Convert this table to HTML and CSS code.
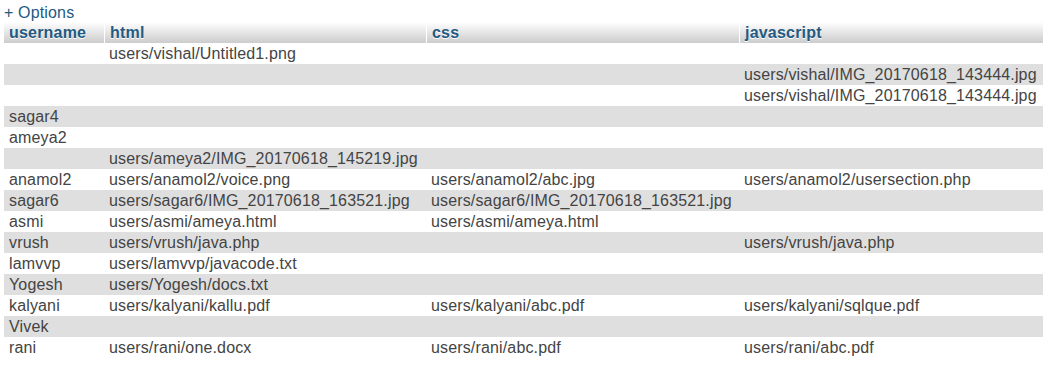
FILE: index.html
```html
<!DOCTYPE html>
<html>
<head>
<meta charset="utf-8">
<link rel="stylesheet" href="styles.css">
</head>
<body>
<div class="options"><a href="#">+ Options</a></div>
<table class="data">
  <colgroup>
    <col class="c1"><col class="c2"><col class="c3"><col class="c4">
  </colgroup>
  <thead>
    <tr><th><a href="#">username</a></th><th><a href="#">html</a></th><th><a href="#">css</a></th><th><a href="#">javascript</a></th></tr>
  </thead>
  <tbody>
    <tr class="odd"><td></td><td>users/vishal/Untitled1.png</td><td></td><td></td></tr>
    <tr class="even"><td></td><td></td><td></td><td>users/vishal/IMG_20170618_143444.jpg</td></tr>
    <tr class="odd"><td></td><td></td><td></td><td>users/vishal/IMG_20170618_143444.jpg</td></tr>
    <tr class="even"><td>sagar4</td><td></td><td></td><td></td></tr>
    <tr class="odd"><td>ameya2</td><td></td><td></td><td></td></tr>
    <tr class="even"><td></td><td>users/ameya2/IMG_20170618_145219.jpg</td><td></td><td></td></tr>
    <tr class="odd"><td>anamol2</td><td>users/anamol2/voice.png</td><td>users/anamol2/abc.jpg</td><td>users/anamol2/usersection.php</td></tr>
    <tr class="even"><td>sagar6</td><td>users/sagar6/IMG_20170618_163521.jpg</td><td>users/sagar6/IMG_20170618_163521.jpg</td><td></td></tr>
    <tr class="odd"><td>asmi</td><td>users/asmi/ameya.html</td><td>users/asmi/ameya.html</td><td></td></tr>
    <tr class="even"><td>vrush</td><td>users/vrush/java.php</td><td></td><td>users/vrush/java.php</td></tr>
    <tr class="odd"><td>lamvvp</td><td>users/lamvvp/javacode.txt</td><td></td><td></td></tr>
    <tr class="even"><td>Yogesh</td><td>users/Yogesh/docs.txt</td><td></td><td></td></tr>
    <tr class="odd"><td>kalyani</td><td>users/kalyani/kallu.pdf</td><td>users/kalyani/abc.pdf</td><td>users/kalyani/sqlque.pdf</td></tr>
    <tr class="even"><td>Vivek</td><td></td><td></td><td></td></tr>
    <tr class="odd"><td>rani</td><td>users/rani/one.docx</td><td>users/rani/abc.pdf</td><td>users/rani/abc.pdf</td></tr>
  </tbody>
</table>
</body>
</html>
```

FILE: styles.css
```css
html, body {
  margin: 0;
  padding: 0;
  background: #fff;
}
body {
  font-family: "Liberation Sans", Arial, sans-serif;
  font-size: 16px;
  color: #444;
  padding: 0 4px;
  letter-spacing: 0.15px;
}
.options {
  height: 22px;
  line-height: 25px;
}
.options a {
  color: #235a81;
  text-decoration: none;
}
.data {
  border-collapse: separate;
  border-spacing: 0;
  table-layout: fixed;
  width: 1039px;
}
.c1 { width: 101px; }
.c2 { width: 322px; }
.c3 { width: 313px; }
.c4 { width: 303px; }
.data th,
.data td {
  box-sizing: border-box;
  padding: 1px 4px 1px 5px;
  height: 21px;
  line-height: 19px;
  white-space: nowrap;
  overflow: hidden;
  text-align: left;
}
.data th {
  background: linear-gradient(#ffffff, #cccccc);
  border-right: 1px solid #fff;
  font-weight: bold;
  letter-spacing: 0.2px;
}
.data th:last-child {
  border-right: 0;
}
.data th a {
  color: #235a81;
  text-decoration: none;
  text-shadow: 0 1px 0 #fff;
}
.data td {
  padding-left: 4px;
}
.data td:first-child {
  padding-left: 5px;
}
.odd td { background: #fff; }
.even td { background: #dfdfdf; }
```
